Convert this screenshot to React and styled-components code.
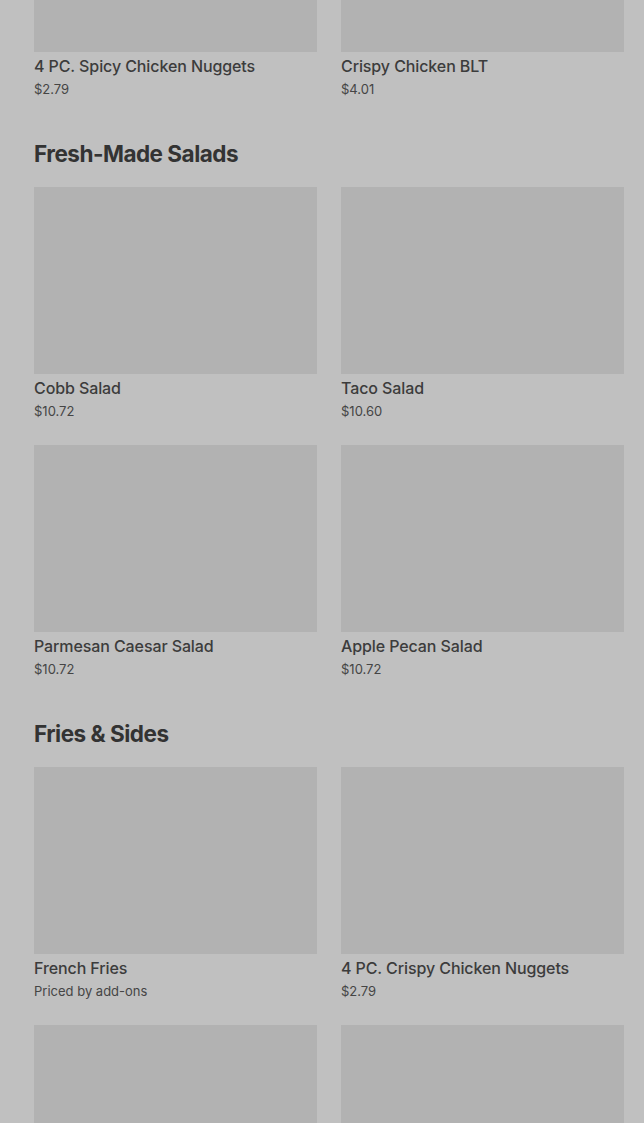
import React from "react";
import styled, { createGlobalStyle } from "styled-components";

const GlobalStyle = createGlobalStyle`
  html, body {
    margin: 0;
    padding: 0;
    background: #c0c0c0;
    overflow: hidden;
  }
  body {
    font-family: Inter, "Noto Sans", "Liberation Sans", sans-serif;
    -webkit-font-smoothing: antialiased;
  }
`;

const Page = styled.div`
  padding: 0 20px 0 34px;
  height: 1123px;
  overflow: hidden;
`;

const Section = styled.section`
  margin-top: ${p => (p.$first ? "-135px" : "40px")};
`;

const Heading = styled.h2`
  margin: 0 0 17px;
  font-size: 22.5px;
  line-height: 32px;
  font-weight: 700;
  letter-spacing: -0.5px;
  color: #333333;
`;

const Grid = styled.div`
  display: grid;
  grid-template-columns: 283px 283px;
  column-gap: 24px;
  row-gap: 25px;
`;

const Card = styled.div`
  display: flex;
  flex-direction: column;
`;

const Thumb = styled.div`
  height: 187px;
  background: #b2b2b2;
`;

const Name = styled.div`
  margin-top: 4px;
  font-size: 16px;
  line-height: 20px;
  font-weight: 500;
  letter-spacing: -0.1px;
  color: #3c3c3c;
`;

const Price = styled.div`
  margin-top: 4px;
  font-size: 13px;
  line-height: 18px;
  color: #454545;
`;

// the last two cards are only visible as their image tops
const sections = [
  {
    first: true,
    items: [
      ["4 PC. Spicy Chicken Nuggets", "$2.79"],
      ["Crispy Chicken BLT", "$4.01"],
    ],
  },
  {
    title: "Fresh-Made Salads",
    items: [
      ["Cobb Salad", "$10.72"],
      ["Taco Salad", "$10.60"],
      ["Parmesan Caesar Salad", "$10.72"],
      ["Apple Pecan Salad", "$10.72"],
    ],
  },
  {
    title: "Fries & Sides",
    items: [
      ["French Fries", "Priced by add-ons"],
      ["4 PC. Crispy Chicken Nuggets", "$2.79"],
      ["side-3"],
      ["side-4"],
    ],
  },
];

export default function App() {
  return (
    <Page>
      <GlobalStyle />
      {sections.map((s, i) => (
        <Section key={i} $first={s.first}>
          {s.title && <Heading>{s.title}</Heading>}
          <Grid>
            {s.items.map(([name, price]) => (
              <Card key={name}>
                <Thumb />
                {price && <Name>{name}</Name>}
                {price && <Price>{price}</Price>}
              </Card>
            ))}
          </Grid>
        </Section>
      ))}
    </Page>
  );
}
